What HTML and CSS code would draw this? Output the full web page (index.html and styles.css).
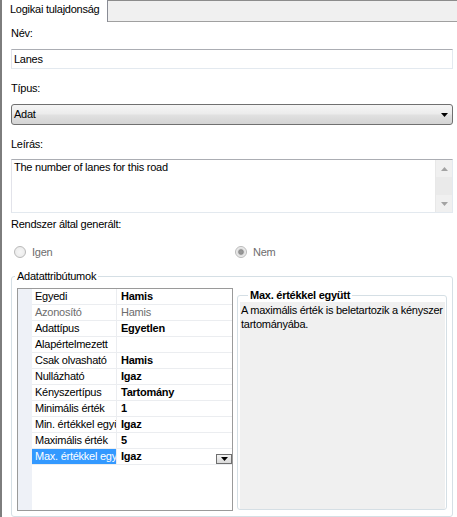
FILE: index.html
```html
<!DOCTYPE html>
<html lang="hu">
<head>
<meta charset="utf-8">
<title>Logikai tulajdonság</title>
<link rel="stylesheet" href="styles.css">
</head>
<body>
<div class="window">
  <div class="tabstrip">
    <div class="tab">Logikai tulajdonság</div>
    <div class="tab-fill"></div>
  </div>
  <div class="panel">
    <div class="label first">Név:</div>
    <div class="textbox">Lanes</div>
    <div class="label">Típus:</div>
    <div class="combo">
      <span>Adat</span>
      <svg class="combo-arrow" width="7" height="4" viewBox="0 0 7 4"><path d="M0 0H7L3.5 4Z" fill="#000"/></svg>
    </div>
    <div class="label">Leírás:</div>
    <div class="memo">
      <div class="memo-text">The number of lanes for this road</div>
      <div class="vscroll">
        <div class="sbtn"><svg width="7" height="4" viewBox="0 0 7 4"><path d="M3.5 0L7 4H0Z" fill="#a3a3a3"/></svg></div>
        <div class="strack"></div>
        <div class="sbtn"><svg width="7" height="4" viewBox="0 0 7 4"><path d="M0 0H7L3.5 4Z" fill="#a3a3a3"/></svg></div>
      </div>
    </div>
    <div class="label gen">Rendszer által generált:</div>
    <div class="radios">
      <div class="radio"><span class="dot"></span>Igen</div>
      <div class="radio"><span class="dot checked"></span>Nem</div>
    </div>
    <fieldset class="group">
      <legend>Adatattribútumok</legend>
      <div class="group-body">
        <div class="pgrid">
          <div class="prow"><div class="pname">Egyedi</div><div class="pval">Hamis</div></div>
          <div class="prow ro"><div class="pname">Azonosító</div><div class="pval">Hamis</div></div>
          <div class="prow"><div class="pname">Adattípus</div><div class="pval">Egyetlen</div></div>
          <div class="prow"><div class="pname">Alapértelmezett</div><div class="pval"></div></div>
          <div class="prow"><div class="pname">Csak olvasható</div><div class="pval">Hamis</div></div>
          <div class="prow"><div class="pname">Nullázható</div><div class="pval">Igaz</div></div>
          <div class="prow"><div class="pname">Kényszertípus</div><div class="pval">Tartomány</div></div>
          <div class="prow"><div class="pname">Minimális érték</div><div class="pval">1</div></div>
          <div class="prow"><div class="pname">Min. értékkel együtt</div><div class="pval">Igaz</div></div>
          <div class="prow"><div class="pname">Maximális érték</div><div class="pval">5</div></div>
          <div class="prow selected"><div class="pname">Max. értékkel együtt</div><div class="pval">Igaz<span class="ddbtn"><svg width="7" height="4" viewBox="0 0 7 4"><path d="M0 0H7L3.5 4Z" fill="#000"/></svg></span></div></div>
        </div>
        <fieldset class="help">
          <legend>Max. értékkel együtt</legend>
          <div class="help-text">A maximális érték is beletartozik a kényszer tartományába.</div>
        </fieldset>
      </div>
    </fieldset>
  </div>
</div>
</body>
</html>
```
FILE: styles.css
```css
* { box-sizing: border-box; }
html, body { margin: 0; padding: 0; background: #fff; }
body {
  font-family: "Liberation Sans", Arial, sans-serif;
  font-size: 11px;
  line-height: 13px;
  letter-spacing: -0.25px;
  color: #000;
  width: 457px;
  height: 517px;
  overflow: hidden;
}
.window {
  height: 517px;
  border-left: 2px solid #7d7d7d;
  display: flex;
  flex-direction: column;
}
.tabstrip { display: flex; height: 22px; flex: none; }
.tab {
  width: 106px;
  background: #fff;
  border-right: 1px solid #898c95;
  padding: 3px 0 0 8px;
  white-space: nowrap;
}
.tab-fill {
  flex: 1;
  background: #f0f0f0;
  border-top: 1px solid #8c8c8c;
  border-bottom: 1px solid #a0a0a0;
}
.panel { flex: 1; padding: 0 4px 0 9px; }
.label { margin-top: 13px; }
.label.first { margin-top: 5px; }
.label.gen { margin-top: 5px; }
.textbox {
  margin-top: 9px;
  height: 20px;
  border: 1px solid #e3e9ef;
  border-top-color: #abadb3;
  border-left-color: #e2e3ea;
  padding: 3px 0 0 2px;
}
.combo {
  margin-top: 9px;
  height: 21px;
  border: 1px solid #707070;
  border-radius: 3px;
  background: linear-gradient(#f5f5f5, #ececec 45%, #e0e0e0 55%, #d4d4d4);
  display: flex;
  align-items: center;
  padding: 0 4px 0 2px;
}
.combo-arrow { margin-left: auto; }
.memo {
  margin-top: 8px;
  height: 54px;
  border: 1px solid #e3e9ef;
  border-top-color: #abadb3;
  border-left-color: #e2e3ea;
  display: flex;
}
.memo-text { flex: 1; padding: 1px 0 0 2px; }
.vscroll {
  width: 17px;
  display: flex;
  flex-direction: column;
  background: #f0f0f0;
  border-left: 1px solid #e8e8e8;
}
.sbtn {
  height: 17px;
  display: flex;
  align-items: center;
  justify-content: center;
}
.strack { flex: 1; background: #eaeaea; }
.radios {
  margin-top: 14px;
  height: 14px;
  display: grid;
  grid-template-columns: 221px 1fr;
  padding-left: 3px;
  color: #6d6d6d;
}
.radio { display: flex; align-items: center; gap: 6px; }
.dot {
  width: 12px;
  height: 12px;
  border-radius: 50%;
  border: 1px solid #b9b9b9;
  background: radial-gradient(circle, #f6f6f6 0, #ececec 5px);
}
.dot.checked {
  background: radial-gradient(circle, #9d9d9d 0, #8e8e8e 2.3px, #dcdcdc 3.2px, #f1f1f1 5px);
}
fieldset { margin: 0; min-width: 0; }
.group {
  margin-top: 11px;
  padding: 5px;
  border: 1px solid #d5dfe5;
  border-radius: 3px;
}
.group > legend { padding: 0 2px; margin-left: -2px; }
.group-body { display: flex; gap: 4px; height: 223px; }
.pgrid {
  width: 216px;
  flex: none;
  border: 1px solid #9a9a9a;
  background: linear-gradient(to right, #eef1f7 14px, #fff 14px);
}
.prow {
  display: flex;
  margin-left: 14px;
  height: 16px;
  border-bottom: 1px solid #ebedf0;
  line-height: 15px;
}
.pname {
  width: 85px;
  flex: none;
  border-right: 1px solid #ebedf0;
  padding-left: 3px;
  white-space: nowrap;
  overflow: hidden;
}
.pval {
  flex: 1;
  display: flex;
  padding-left: 4px;
  font-weight: bold;
  white-space: nowrap;
  overflow: hidden;
}
.prow.ro .pname, .prow.ro .pval { color: #6d6d6d; }
.prow.ro .pval { font-weight: normal; }
.prow.selected .pname {
  background: linear-gradient(to right, #3399ff 84px, #fff 84px);
  color: #fff;
}
.ddbtn {
  margin-left: auto;
  margin-top: 5px;
  width: 16px;
  height: 10px;
  border: 1px solid #6f6f6f;
  background: linear-gradient(#f3f3f3, #dadada);
  display: flex;
  align-items: center;
  justify-content: center;
}
.help {
  flex: 1;
  margin: 1px 0 1px;
  padding: 0 1px 0 2px;
  border: 1px solid #d5dfe5;
  border-radius: 3px;
  display: flex;
  flex-direction: column;
}
.help > legend { font-weight: bold; padding: 0 2px; margin-left: 8px; }
.help-text {
  flex: 1;
  background: #f0f0f0;
  padding: 1px 0 0 1px;
  line-height: 14px;
}
```
